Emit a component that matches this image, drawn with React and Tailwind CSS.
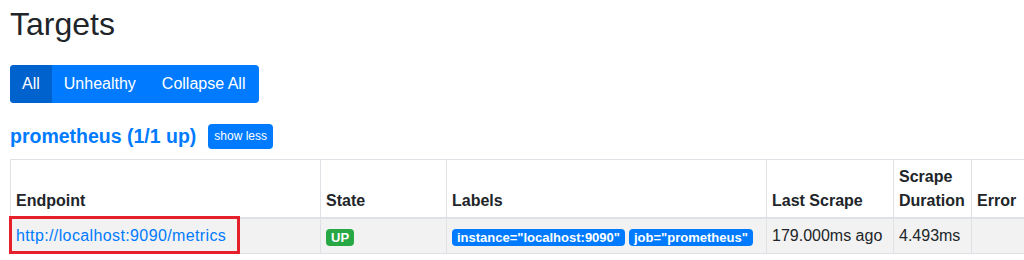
import React from "react";

const labels = ['instance="localhost:9090"', 'job="prometheus"'];

export default function App() {
  return (
    <div
      className="w-screen overflow-hidden bg-white px-[10px] pt-[5px] text-[16px] leading-normal text-[#212529]"
      style={{ fontFamily: '"Liberation Sans", Arial, sans-serif' }}
    >
      {/* page title */}
      <h2 className="mb-[22px] text-[32px] font-medium leading-[1.2]">Targets</h2>

      {/* filter buttons */}
      <div className="inline-flex overflow-hidden rounded-[4px] bg-[#007bff] text-white">
        <button className="bg-[#0062cc] px-[12px] py-[7px] leading-normal">All</button>
        <button className="px-[12px] py-[7px] leading-normal">Unhealthy</button>
        <button className="px-[14px] py-[7px] leading-normal">Collapse All</button>
      </div>

      {/* scrape pool header */}
      <div className="mt-[21px] flex items-center gap-[12px]">
        <h3 className="text-[19.5px] font-bold leading-[1.2] text-[#007bff]">prometheus (1/1 up)</h3>
        <button className="rounded-[4px] bg-[#007bff] px-[6px] py-[3px] text-[12px] leading-[19px] text-white">
          show less
        </button>
      </div>

      {/* targets table */}
      <div className="relative mt-[10px] w-[1100px]">
        <table className="w-full table-fixed border-collapse">
          <thead>
            <tr className="align-bottom font-bold">
              <th className="w-[310px] border border-b-2 border-[#dee2e6] px-[5px] pt-[5px] pb-[4px] text-left">Endpoint</th>
              <th className="w-[126px] border border-b-2 border-[#dee2e6] px-[5px] pt-[5px] pb-[4px] text-left">State</th>
              <th className="w-[320px] border border-b-2 border-[#dee2e6] px-[5px] pt-[5px] pb-[4px] text-left">Labels</th>
              <th className="w-[127px] border border-b-2 border-[#dee2e6] px-[5px] pt-[5px] pb-[4px] text-left">Last Scrape</th>
              <th className="w-[78px] border border-b-2 border-[#dee2e6] px-[5px] pt-[5px] pb-[4px] text-left">Scrape Duration</th>
              <th className="border border-b-2 border-[#dee2e6] px-[5px] pt-[5px] pb-[4px] text-left">Error</th>
            </tr>
          </thead>
          <tbody>
            <tr className="bg-[#f2f2f2] align-top">
              <td className="border border-[#dee2e6] p-[5px]">
                <a className="tracking-[0.38px] text-[#007bff]">http://localhost:9090/metrics</a>
              </td>
              <td className="border border-[#dee2e6] p-[5px]">
                <div className="flex h-[24px] items-center pt-[3px]">
                  <span className="rounded-[4px] bg-[#28a745] px-[5px] py-[2px] text-[13px] font-bold leading-[13px] text-white">
                    UP
                  </span>
                </div>
              </td>
              <td className="border border-[#dee2e6] p-[5px]">
                <div className="flex h-[24px] items-center gap-[4px] pt-[3px]">
                  {labels.map((l) => (
                    <span
                      key={l}
                      className="rounded-[4px] bg-[#007bff] px-[5px] py-[2px] text-[13px] font-bold leading-[13px] text-white"
                    >
                      {l}
                    </span>
                  ))}
                </div>
              </td>
              <td className="border border-[#dee2e6] p-[5px]">179.000ms ago</td>
              <td className="border border-[#dee2e6] p-[5px]">4.493ms</td>
              <td className="border border-[#dee2e6] p-[5px]"></td>
            </tr>
          </tbody>
        </table>
        {/* highlight box */}
        <div className="absolute left-[-1px] top-[57px] h-[38px] w-[231px] border-[3px] border-[#e5202b]" />
      </div>
    </div>
  );
}
